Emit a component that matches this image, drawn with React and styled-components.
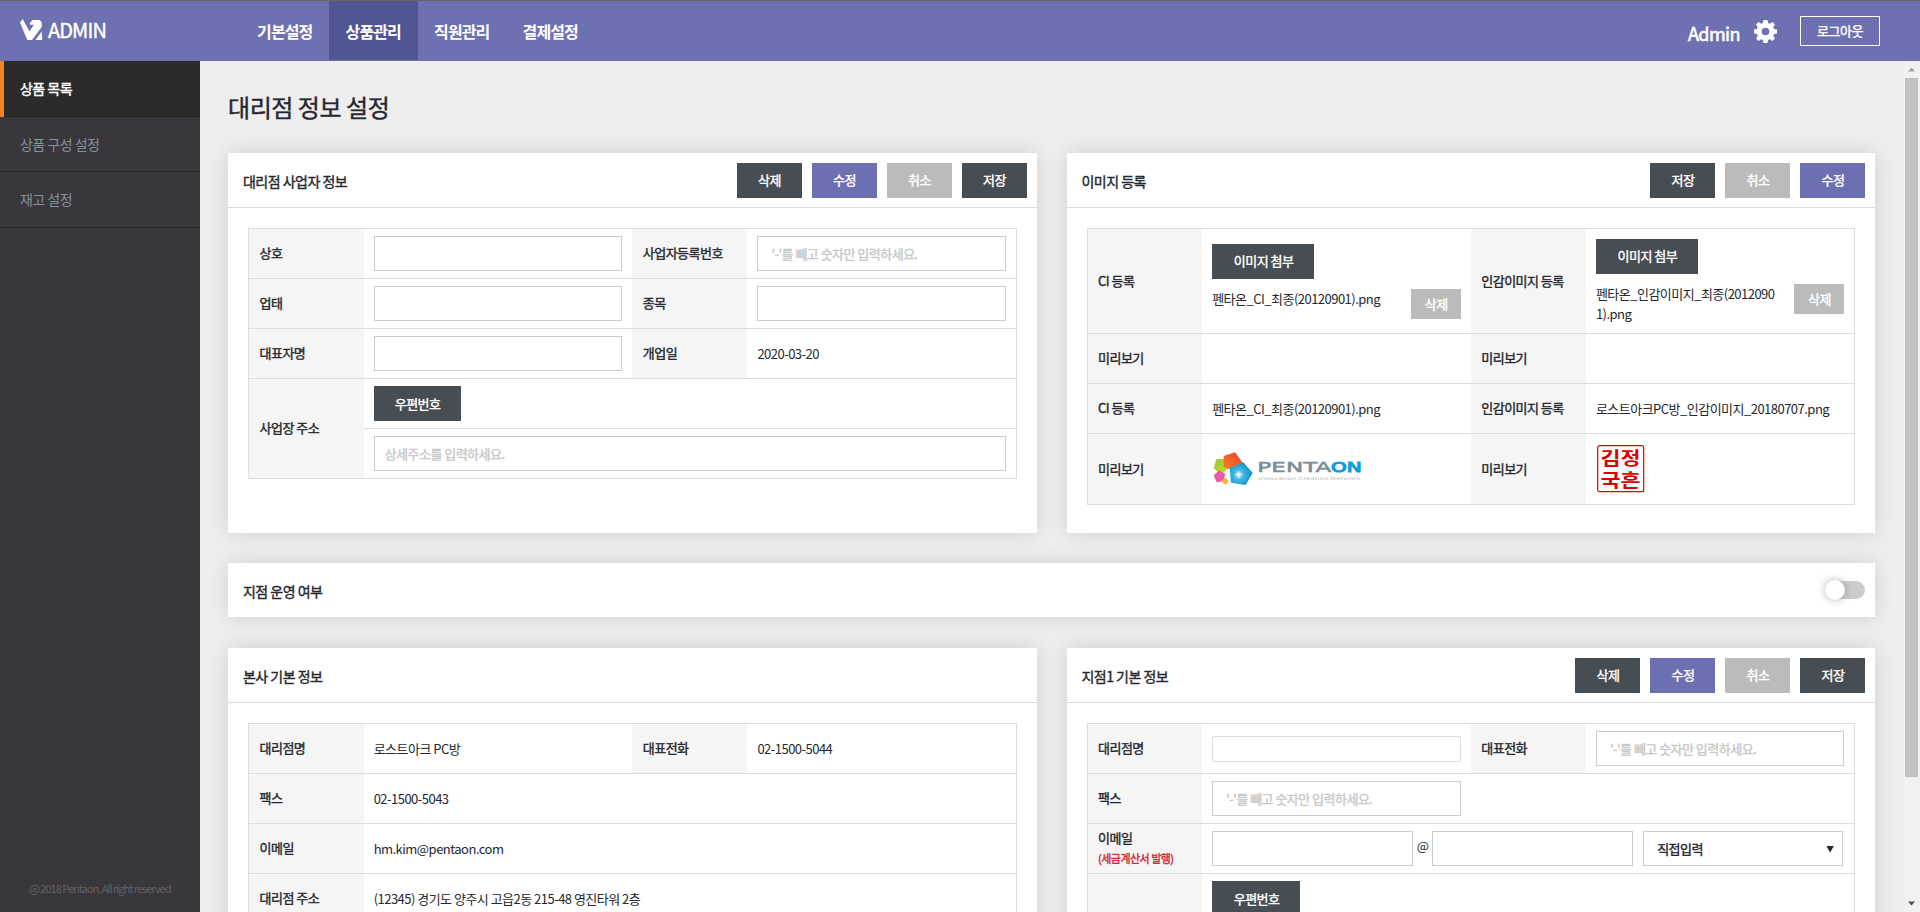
import React from "react";
import styled, { createGlobalStyle, css } from "styled-components";

const GlobalStyle = createGlobalStyle`
  *, *::before, *::after { box-sizing: border-box; }
  body { margin: 0; background: #eee; }
  body, button, input, table {
    font-family: "Noto Sans CJK KR", "Noto Sans", sans-serif;
    font-size: 13px;
    line-height: 20px;
    letter-spacing: -0.52px;
    color: #25282e;
  }
`;

const tones = { dark: "#464d53", primary: "#6d70b0", muted: "#bbb" };

/* Medium weight, between the regular and bold faces */
const medium = css`
  font-weight: 400;
  -webkit-text-stroke: 0.4px currentColor;
`;

const Page = styled.div`
  height: 912px;
  display: flex;
  flex-direction: column;
  overflow: hidden;
`;

/* Top bar */
const TopBar = styled.header`
  flex: none;
  height: 61px;
  display: flex;
  border-top: 1px solid #666;
  background: #6d71b1;
  color: #fff;
`;

const Brand = styled.div`
  width: 240.500px;
  height: 57px;
  padding-left: 20px;
  display: flex;
  align-items: center;
  gap: 5px;
  font-size: 20px;
  letter-spacing: -0.9px;
  ${medium}

  svg { display: block; }
`;

const Nav = styled.nav`
  display: flex;
  flex: 1;
`;

const NavItem = styled.a`
  width: 88.5px;
  height: 59px;
  line-height: 60px;
  text-align: center;
  font-size: 16px;
  font-weight: 700;
  letter-spacing: -0.9px;
  background: ${(p) => (p.$active ? "#505593" : "transparent")};
`;

const Account = styled.div`
  display: flex;
  align-items: center;
  height: 60px;
  padding-right: 40px;
`;

const UserName = styled.span`
  font-size: 18px;
  line-height: 26px;
  margin-top: 3px;
  margin-right: 14px;
  ${medium}
  -webkit-text-stroke-width: 0.6px;
`;

const Gear = styled.svg`
  display: block;
  margin-right: 23px;
`;

const LogoutButton = styled.button`
  width: 80px;
  height: 30px;
  padding: 0;
  border: 1px solid #fff;
  background: transparent;
  color: #fff;
  ${medium}
`;

/* Frame below the top bar */
const Body = styled.div`
  flex: 1;
  min-height: 0;
  display: flex;
`;

const Sidebar = styled.aside`
  flex: none;
  width: 200px;
  display: flex;
  flex-direction: column;
  background: #39373b;
`;

const SideItem = styled.a`
  display: block;
  height: ${(p) => p.$height || 56}px;
  padding-left: ${(p) => (p.$active ? 16 : 20)}px;
  line-height: 54px;
  font-size: 14px;
  color: ${(p) => (p.$active ? "#fff" : "#87919b")};
  background: ${(p) => (p.$active ? "#2b2b2c" : "transparent")};
  border-left: ${(p) => (p.$active ? "4px solid #f58220" : "0")};
  box-shadow: inset 0 -1px 0 #232327;
  ${(p) => p.$active && medium}
`;

const Copyright = styled.p`
  margin: auto 0 14px;
  text-align: center;
  font-size: 11px;
  letter-spacing: -1px;
  color: #626066;
`;

const Content = styled.main`
  flex: 1;
  min-width: 0;
  padding: 30px 28px 0;
`;

const PageTitle = styled.h1`
  margin: 0 0 30px;
  font-size: 24px;
  line-height: 32px;
  letter-spacing: -0.45px;
  ${medium}
`;

const Columns = styled.div`
  display: grid;
  grid-template-columns: 1fr 1fr;
  gap: 30px;
`;

const Panel = styled.section`
  height: ${(p) => p.$height}px;
  background: #fff;
  box-shadow: 0 0 20px rgba(0, 0, 0, 0.13);
`;

const StripPanel = styled(Panel)`
  height: 54px;
  margin: 30px 0 31px;
  padding: 0 10px 0 15px;
  display: flex;
  align-items: center;
  justify-content: space-between;
`;

const PanelHead = styled.div`
  height: 55px;
  padding: 0 10px 0 15px;
  display: flex;
  align-items: center;
  justify-content: space-between;
  border-bottom: 1px solid #ddd;
`;

const PanelTitle = styled.h2`
  margin: 0;
  padding-top: 1px;
  font-size: 14px;
  ${medium}
`;

const Actions = styled.div`
  display: flex;
  gap: 10px;
`;

const Button = styled.button`
  flex: none;
  display: block;
  width: ${(p) => p.$width || 65}px;
  height: ${(p) => (p.$small ? 30 : 35)}px;
  padding: 0 0 0 1px;
  border: 0;
  color: #fff;
  background: ${(p) => tones[p.$tone || "dark"]};
  ${medium}
`;

/* Form tables */
const FormTable = styled.table`
  width: calc(100% - 40px);
  margin: 20px 20px 0;
  table-layout: fixed;
  border-collapse: collapse;
  border: 1px solid #ddd;
`;

const Row = styled.tr`
  height: ${(p) => p.$height || 50}px;
`;

const Label = styled.th`
  padding: 0 0 1px 10.500px;
  text-align: left;
  background: #f5f5f5;
  border-top: 1px solid #ddd;
  border-bottom: 1px solid #ddd;
  ${medium}
`;

const Value = styled.td`
  padding: 0 10px;
  border-top: 1px solid #ddd;
  border-bottom: 1px solid #ddd;
`;

const Input = styled.input`
  display: block;
  width: 100%;
  height: 35px;
  padding: 0 ${(p) => p.$indent || 10}px;
  border: 1px solid #ccc;
  border-radius: 0;
  background: #fff;
  outline: 0;

  &::placeholder {
    color: #c8c8c8;
    opacity: 1;
    -webkit-text-stroke: 0.4px #c8c8c8;
  }
`;

const PlainInput = styled(Input)`
  height: 26px;
  border-color: #ddd;
  border-radius: 2px;
`;

const TaxNote = styled.small`
  display: block;
  font-size: 11px;
  color: #cf2a35;
`;

const FileRow = styled.div`
  display: flex;
  align-items: flex-start;
  gap: 10px;
  margin-top: 10px;
`;

const FileName = styled.span`
  flex: 1;
  word-break: break-all;
`;

const EmailRow = styled.div`
  display: flex;
  align-items: center;
`;

const EmailPart = styled(Input)`
  flex: none;
  width: 201px;
`;

const At = styled.span`
  width: 19px;
  padding-bottom: 5px;
  text-align: center;
`;

const Select = styled.div`
  width: 200px;
  height: 35px;
  margin-left: 10px;
  padding: 1px 8px 0 13px;
  display: flex;
  align-items: center;
  justify-content: space-between;
  border: 1px solid #ccc;
  ${medium}
`;

const Caret = styled.span`
  width: 8px;
  height: 7px;
  background: #25282e;
  clip-path: polygon(0 0, 100% 0, 50% 100%);
`;

const Picture = styled.svg`
  display: block;
  overflow: visible;
`;

/* Toggle */
const Track = styled.span`
  width: 39px;
  height: 18px;
  border-radius: 9px;
  background: #ccc;
  display: flex;
  align-items: center;
`;

const Knob = styled.span`
  flex: none;
  width: 20px;
  height: 20px;
  margin-left: -1px;
  border-radius: 50%;
  background: #fff;
  box-shadow: 0 0 8px rgba(0, 0, 0, 0.3);
`;

/* Scroll bar */
const ScrollTrack = styled.div`
  flex: none;
  width: 17px;
  padding: 6px 2px;
  display: flex;
  flex-direction: column;
  align-items: center;
  background: #f1f1f1;
`;

const ScrollThumb = styled.div`
  width: 13px;
  height: 699px;
  margin: 6px 0 auto;
  background: #c1c1c1;
`;

function Arrow({ down }) {
  return (
    <Picture width="7" height="5" viewBox="0 0 7 5">
      <path d={down ? "M0 0.5h7L3.5 4.5z" : "M0 4.5h7L3.5 0.5z"} fill={down ? "#505050" : "#a3a3a3"} />
    </Picture>
  );
}

function PentaonLogo() {
  return (
    <Picture width="150" height="36" viewBox="0 0 450 108">
      <defs>
        <linearGradient id="orange" x1="0" y1="1" x2="1" y2="0">
          <stop offset="0" stopColor="#f58220" />
          <stop offset="1" stopColor="#ee3e2b" />
        </linearGradient>
        <linearGradient id="green" x1="0" y1="0" x2="1" y2="1">
          <stop offset="0" stopColor="#8dc63f" />
          <stop offset="1" stopColor="#d7df23" />
        </linearGradient>
        <radialGradient id="blue" cx="0.4" cy="0.55" r="0.6">
          <stop offset="0" stopColor="#e6f8ff" />
          <stop offset="0.35" stopColor="#3fb9ea" />
          <stop offset="1" stopColor="#0b8cc4" />
        </radialGradient>
      </defs>
      <path d="M13 25L40 23L51 50L28 72L5 52z" fill="url(#green)" />
      <path d="M5 73L22 58L39 69L36 91L14 94z" fill="#ea5ba5" />
      <path d="M31 86L42 81L50 91L42 101L32 96z" fill="#fbb03b" />
      <path d="M35 15L69 4L92 35L56 55L35 49z" fill="url(#orange)" />
      <path d="M53 51L94 34L122 66L101 102L57 95z" fill="url(#blue)" />
      <path d="M80 57L82 67L91 70L82 73L80 84L77 73L67 70L77 67z" fill="#fff" opacity="0.7" />
      <text x="136" y="64" fontFamily="DejaVu Sans, sans-serif" fontSize="40" letterSpacing="0" textLength="222" lengthAdjust="spacingAndGlyphs" fill="#7f8c95" stroke="#7f8c95" strokeWidth="1.5">PENTA</text>
      <text x="357" y="64" fontFamily="DejaVu Sans, sans-serif" fontSize="40" letterSpacing="0" textLength="92" lengthAdjust="spacingAndGlyphs" fill="#0d9ddb" stroke="#0d9ddb" strokeWidth="3">ON</text>
      <text x="139" y="87" fontFamily="DejaVu Sans, sans-serif" fontSize="13" letterSpacing="0" textLength="306" lengthAdjust="spacingAndGlyphs" fill="#b4babe">Innovation Creation Network</text>
    </Picture>
  );
}

function Seal() {
  return (
    <Picture width="50" height="50" viewBox="0 0 50 50">
      <rect x="1.7" y="1.7" width="46" height="46" rx="2" fill="none" stroke="#e00000" strokeWidth="1.2" />
      <g fill="#e00000" fontSize="18" fontWeight="700" letterSpacing="0">
        <text x="4.500" y="20.500" textLength="40" lengthAdjust="spacingAndGlyphs">김정</text>
        <text x="4.500" y="42.500" textLength="40" lengthAdjust="spacingAndGlyphs">국흔</text>
      </g>
    </Picture>
  );
}

function Cols() {
  return (
    <colgroup>
      <col style={{ width: "15%" }} />
      <col style={{ width: "35%" }} />
      <col style={{ width: "15%" }} />
      <col style={{ width: "35%" }} />
    </colgroup>
  );
}

function Head({ title, actions = [] }) {
  return (
    <PanelHead>
      <PanelTitle>{title}</PanelTitle>
      <Actions>
        {actions.map(([text, tone]) => (
          <Button key={text} $tone={tone}>{text}</Button>
        ))}
      </Actions>
    </PanelHead>
  );
}

function Attachment({ name }) {
  return (
    <>
      <Button $width={102}>이미지 첨부</Button>
      <FileRow>
        <FileName>{name}</FileName>
        <Button $width={50} $small $tone="muted">삭제</Button>
      </FileRow>
    </>
  );
}

const numberHint = "'-'를 빼고 숫자만 입력하세요.";
const fullActions = [["삭제", "dark"], ["수정", "primary"], ["취소", "muted"], ["저장", "dark"]];
const imageActions = [["저장", "dark"], ["취소", "muted"], ["수정", "primary"]];

export default function App() {
  return (
    <Page>
      <GlobalStyle />
      <TopBar>
        <Brand>
          <svg width="23" height="22" viewBox="0 0 23 22" fill="#fff">
            <path d="M2.700 0L0 3.500L7.300 21H12L21.700 8Q22.500 2 19.300 1H12.500L9.500 4.500L11 6L14 5.500L9.500 12.500z" />
            <path d="M21.700 12.500L22.300 21H15.500z" />
          </svg>
          ADMIN
        </Brand>
        <Nav>
          <NavItem>기본설정</NavItem>
          <NavItem $active>상품관리</NavItem>
          <NavItem>직원관리</NavItem>
          <NavItem>결제설정</NavItem>
        </Nav>
        <Account>
          <UserName>Admin</UserName>
          <Gear width="23" height="23" viewBox="0 0 24 24" fill="#fff" fillRule="evenodd">
            <path d="M9.900 0h4.200l.6 3.100 1.900.8L19.200 2.100l2.700 2.700-1.800 2.600.8 1.900 3.100.6v4.200l-3.100.6-.8 1.900 1.800 2.600-2.700 2.700-2.600-1.800-1.900.8-.6 3.100H9.900l-.6-3.100-1.900-.8-2.600 1.800-2.700-2.700 1.800-2.600-.8-1.900L0 14.100V9.900l3.100-.6.800-1.900L2.100 4.800l2.700-2.700 2.600 1.800 1.900-.8zM12 8a4 4 0 1 0 0 8 4 4 0 0 0 0-8z" />
          </Gear>
          <LogoutButton>로그아웃</LogoutButton>
        </Account>
      </TopBar>

      <Body>
        <Sidebar>
          <SideItem $active>상품 목록</SideItem>
          <SideItem $height={55}>상품 구성 설정</SideItem>
          <SideItem>재고 설정</SideItem>
          <Copyright>@ 2018 Pentaon. All right reserved</Copyright>
        </Sidebar>

        <Content>
          <PageTitle>대리점 정보 설정</PageTitle>

          <Columns>
            <Panel $height={380}>
              <Head title="대리점 사업자 정보" actions={fullActions} />
              <FormTable>
                <Cols />
                <tbody>
                  <Row>
                    <Label>상호</Label>
                    <Value><Input /></Value>
                    <Label>사업자등록번호</Label>
                    <Value><Input $indent={13} placeholder={numberHint} /></Value>
                  </Row>
                  <Row>
                    <Label>업태</Label>
                    <Value><Input /></Value>
                    <Label>종목</Label>
                    <Value><Input /></Value>
                  </Row>
                  <Row>
                    <Label>대표자명</Label>
                    <Value><Input /></Value>
                    <Label>개업일</Label>
                    <Value>2020-03-20</Value>
                  </Row>
                  <Row>
                    <Label rowSpan={2}>사업장 주소</Label>
                    <Value colSpan={3}><Button $width={87}>우편번호</Button></Value>
                  </Row>
                  <Row>
                    <Value colSpan={3}><Input placeholder="상세주소를 입력하세요." /></Value>
                  </Row>
                </tbody>
              </FormTable>
            </Panel>

            <Panel $height={380}>
              <Head title="이미지 등록" actions={imageActions} />
              <FormTable>
                <Cols />
                <tbody>
                  <Row $height={105}>
                    <Label>CI 등록</Label>
                    <Value><Attachment name="펜타온_CI_최종(20120901).png" /></Value>
                    <Label>인감이미지 등록</Label>
                    <Value><Attachment name="펜타온_인감이미지_최종(20120901).png" /></Value>
                  </Row>
                  <Row>
                    <Label>미리보기</Label>
                    <Value />
                    <Label>미리보기</Label>
                    <Value />
                  </Row>
                  <Row>
                    <Label>CI 등록</Label>
                    <Value>펜타온_CI_최종(20120901).png</Value>
                    <Label>인감이미지 등록</Label>
                    <Value>로스트아크PC방_인감이미지_20180707.png</Value>
                  </Row>
                  <Row $height={71}>
                    <Label>미리보기</Label>
                    <Value><PentaonLogo /></Value>
                    <Label>미리보기</Label>
                    <Value><Seal /></Value>
                  </Row>
                </tbody>
              </FormTable>
            </Panel>
          </Columns>

          <StripPanel>
            <PanelTitle>지점 운영 여부</PanelTitle>
            <Track><Knob /></Track>
          </StripPanel>

          <Columns>
            <Panel $height={400}>
              <Head title="본사 기본 정보" />
              <FormTable>
                <Cols />
                <tbody>
                  <Row>
                    <Label>대리점명</Label>
                    <Value>로스트아크 PC방</Value>
                    <Label>대표전화</Label>
                    <Value>02-1500-5044</Value>
                  </Row>
                  <Row>
                    <Label>팩스</Label>
                    <Value colSpan={3}>02-1500-5043</Value>
                  </Row>
                  <Row>
                    <Label>이메일</Label>
                    <Value colSpan={3}>hm.kim@pentaon.com</Value>
                  </Row>
                  <Row>
                    <Label>대리점 주소</Label>
                    <Value colSpan={3}>(12345) 경기도 양주시 고읍2동 215-48 영진타워 2층</Value>
                  </Row>
                </tbody>
              </FormTable>
            </Panel>

            <Panel $height={400}>
              <Head title="지점1 기본 정보" actions={fullActions} />
              <FormTable>
                <Cols />
                <tbody>
                  <Row>
                    <Label>대리점명</Label>
                    <Value><PlainInput /></Value>
                    <Label>대표전화</Label>
                    <Value><Input $indent={13} placeholder={numberHint} /></Value>
                  </Row>
                  <Row>
                    <Label>팩스</Label>
                    <Value><Input $indent={13} placeholder={numberHint} /></Value>
                    <Value colSpan={2} />
                  </Row>
                  <Row>
                    <Label>이메일<TaxNote>(세금계산서 발행)</TaxNote></Label>
                    <Value colSpan={3}>
                      <EmailRow>
                        <EmailPart />
                        <At>@</At>
                        <EmailPart />
                        <Select>직접입력<Caret /></Select>
                      </EmailRow>
                    </Value>
                  </Row>
                  <Row>
                    <Label />
                    <Value colSpan={3}><Button $width={88}>우편번호</Button></Value>
                  </Row>
                </tbody>
              </FormTable>
            </Panel>
          </Columns>
        </Content>

        <ScrollTrack>
          <Arrow />
          <ScrollThumb />
          <Arrow down />
        </ScrollTrack>
      </Body>
    </Page>
  );
}
